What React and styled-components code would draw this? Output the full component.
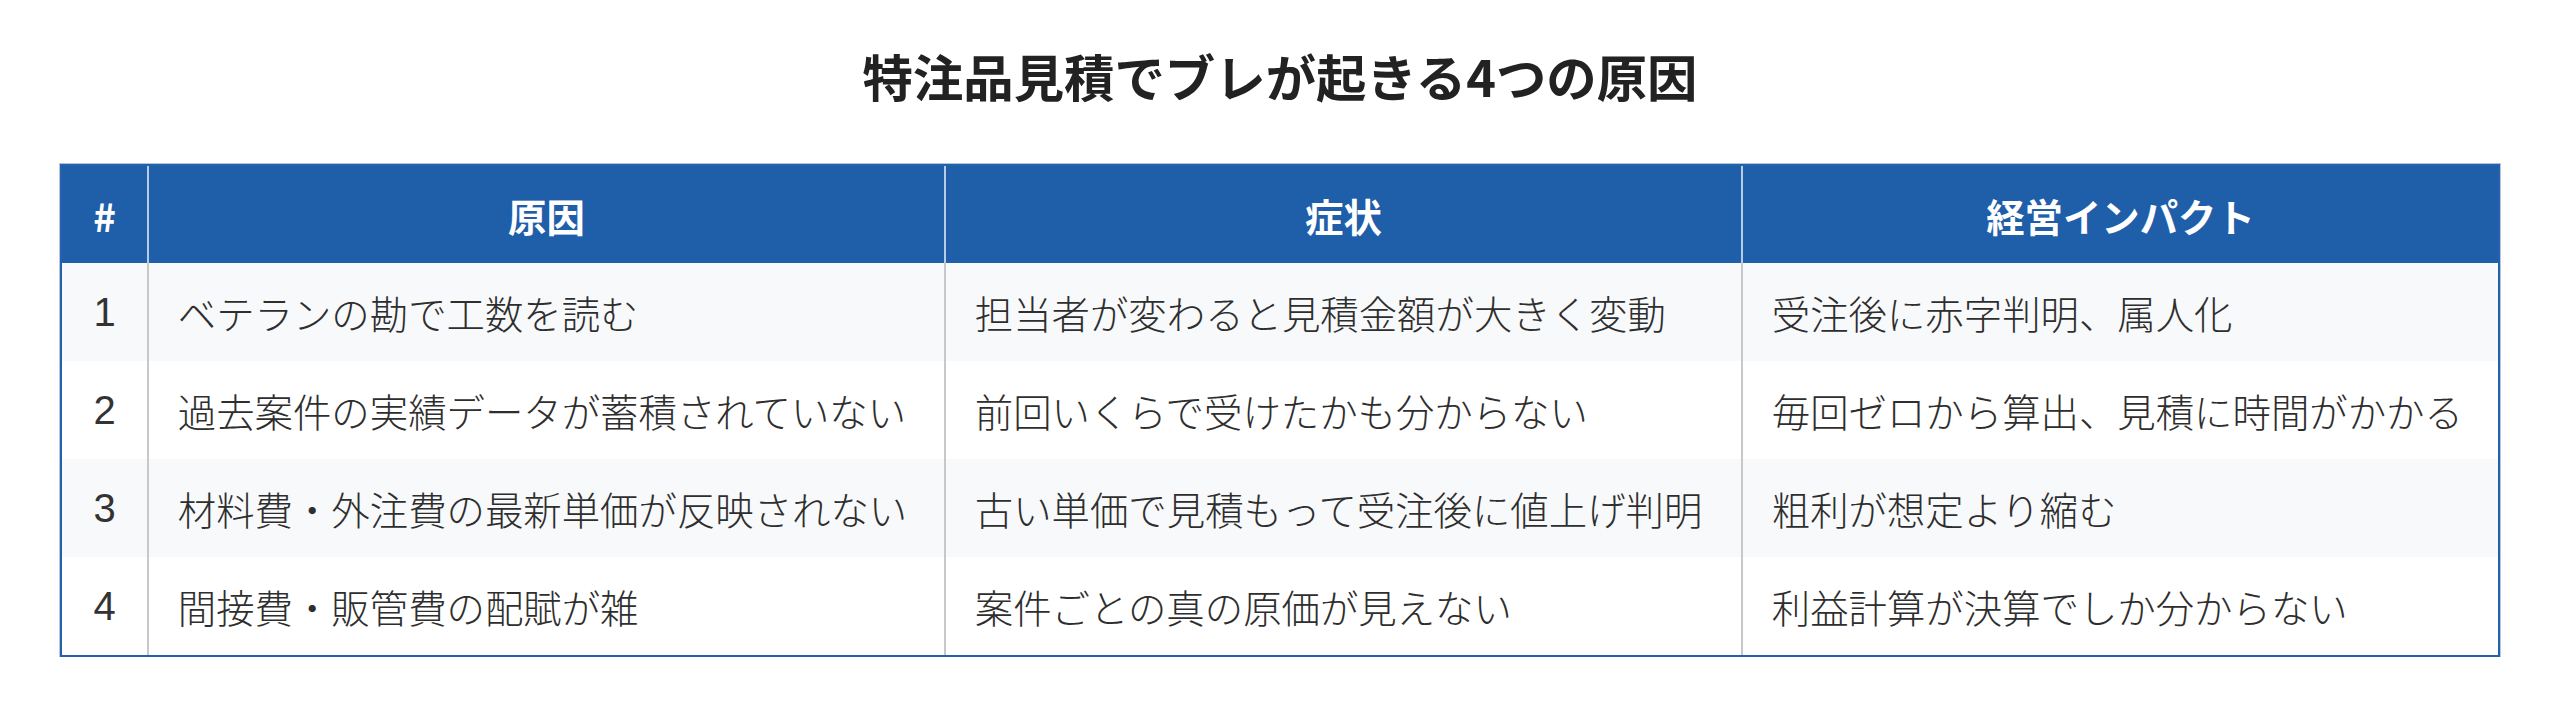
import React from 'react';
import styled, { createGlobalStyle } from 'styled-components';

const headColor = '#1f5ea8';
const stripeColor = '#f8f9fb';

const GlobalStyle = createGlobalStyle`
  html, body {
    margin: 0;
    padding: 0;
    background: #ffffff;
  }
  body {
    font-family: "Noto Sans CJK JP", "Noto Sans", sans-serif;
    color: #333333;
  }
`;

const Page = styled.div`
  padding: 38px 60px 0;
  box-sizing: border-box;
  width: 2560px;
`;

const Title = styled.h2`
  margin: 0 0 50px;
  text-align: center;
  font-size: 50.4px;
  line-height: 76px;
  font-weight: 700;
  color: #222222;
`;

const Frame = styled.div`
  border: 2px solid #2361ae;
  box-shadow: 0 0 0 1px #b9c5d6;
`;

const Table = styled.table`
  width: 100%;
  border-collapse: collapse;
  table-layout: fixed;
  font-size: 38.4px;
`;

const Col = styled.col`
  width: ${p => p.$w}px;
`;

const HeadCell = styled.th`
  background: ${headColor};
  color: #ffffff;
  font-weight: 700;
  text-align: center;
  height: 97px;
  padding: 0 28.8px;
  line-height: 60px;
  box-sizing: border-box;
  & + & {
    border-left: 2px solid #b7cbe6;
  }
`;

const Row = styled.tr`
  background: ${p => (p.$striped ? stripeColor : '#ffffff')};
`;

const Cell = styled.td`
  padding: 19px 28.8px;
  line-height: 60px;
  text-align: left;
  white-space: nowrap;
  font-weight: 300;
  color: #2e2e2e;
  & + & {
    border-left: 2px solid #c8c8c8;
  }
`;

const NumCell = styled(Cell)`
  text-align: center;
  font-family: "Liberation Sans", "Noto Sans CJK JP", sans-serif;
  font-weight: 400;
  font-size: 40px;
  color: #333333;
`;

const rows = [
  ['ベテランの勘で工数を読む', '担当者が変わると見積金額が大きく変動', '受注後に赤字判明、属人化'],
  ['過去案件の実績データが蓄積されていない', '前回いくらで受けたかも分からない', '毎回ゼロから算出、見積に時間がかかる'],
  ['材料費・外注費の最新単価が反映されない', '古い単価で見積もって受注後に値上げ判明', '粗利が想定より縮む'],
  ['間接費・販管費の配賦が雑', '案件ごとの真の原価が見えない', '利益計算が決算でしか分からない'],
];

export default function App() {
  return (
    <>
      <GlobalStyle />
      <Page>
        <Title>特注品見積でブレが起きる4つの原因</Title>
        <Frame>
          <Table>
            <colgroup>
              <Col $w={86} />
              <Col $w={797} />
              <Col $w={797} />
              <Col $w={756} />
            </colgroup>
            <thead>
              <tr>
                <HeadCell>#</HeadCell>
                <HeadCell>原因</HeadCell>
                <HeadCell>症状</HeadCell>
                <HeadCell>経営インパクト</HeadCell>
              </tr>
            </thead>
            <tbody>
              {rows.map((r, i) => (
                <Row key={i} $striped={i % 2 === 0}>
                  <NumCell>{i + 1}</NumCell>
                  <Cell>{r[0]}</Cell>
                  <Cell>{r[1]}</Cell>
                  <Cell>{r[2]}</Cell>
                </Row>
              ))}
            </tbody>
          </Table>
        </Frame>
      </Page>
    </>
  );
}
